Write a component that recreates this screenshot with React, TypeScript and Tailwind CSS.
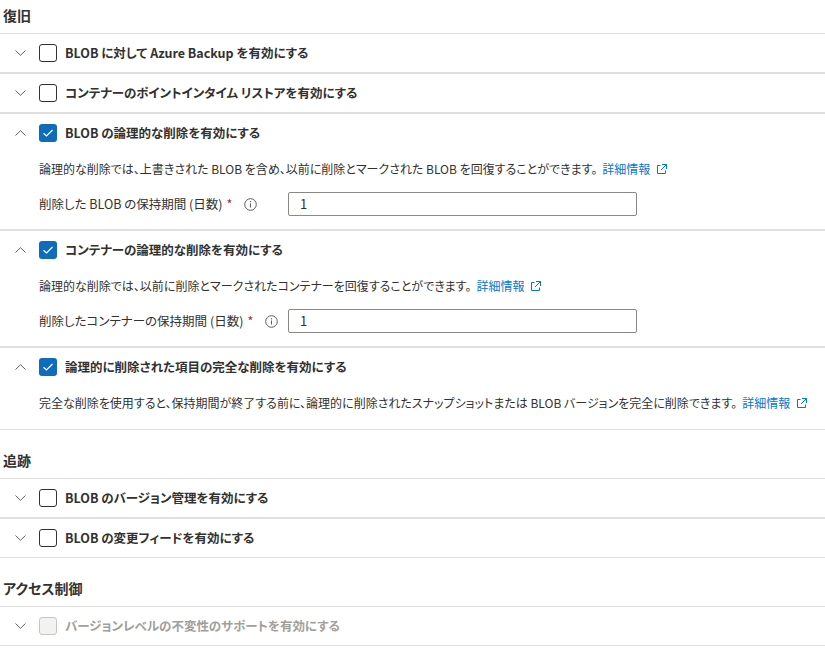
import React from "react";

const FONT = "[font-family:'Noto_Sans_CJK_JP','Noto_Sans',sans-serif] [font-feature-settings:'palt']";

function Chevron({ up }: { up?: boolean }) {
  return (
    <svg width="11" height="6" viewBox="0 0 11 6" className="shrink-0">
      {up ? (
        <path d="M0.5 5.5 L5.5 0.7 L10.5 5.5" fill="none" stroke="#605e5c" strokeWidth="1" />
      ) : (
        <path d="M0.5 0.5 L5.5 5.3 L10.5 0.5" fill="none" stroke="#605e5c" strokeWidth="1" />
      )}
    </svg>
  );
}

function Checkbox({ checked, disabled }: { checked?: boolean; disabled?: boolean }) {
  if (checked) {
    return (
      <div className="w-[18px] h-[18px] rounded-[3px] bg-[#0f6cbd] flex items-center justify-center shrink-0">
        <svg width="12" height="10" viewBox="0 0 12 10">
          <path d="M1.5 5.2 L4.5 8 L10.5 2" fill="none" stroke="white" strokeWidth="1.2" />
        </svg>
      </div>
    );
  }
  if (disabled) {
    return <div className="w-[18px] h-[18px] rounded-[3px] border border-[#c8c6c4] bg-[#f3f2f1] shrink-0" />;
  }
  return <div className="w-[18px] h-[18px] rounded-[3px] border border-[#323130] bg-white shrink-0" />;
}

function ExtIcon() {
  return (
    <svg width="11" height="11" viewBox="0 0 11 11" className="inline-block ml-[6px] align-[-1px]">
      <path d="M4.5 1.5 H1.5 V9.5 H9.5 V6.5" fill="none" stroke="#0078d4" strokeWidth="1" />
      <path d="M6 0.5 H10.5 V5 M10.5 0.5 L5 6" fill="none" stroke="#0078d4" strokeWidth="1" />
    </svg>
  );
}

function InfoIcon() {
  return (
    <svg width="13" height="13" viewBox="0 0 13 13" className="shrink-0">
      <circle cx="6.5" cy="6.5" r="5.8" fill="none" stroke="#605e5c" strokeWidth="1" />
      <path d="M6.5 5.5 V9.5" stroke="#605e5c" strokeWidth="1" />
      <circle cx="6.5" cy="3.8" r="0.7" fill="#605e5c" />
    </svg>
  );
}

function Heading({ title, top }: { title: string; top: string }) {
  return (
    <div className={`${top} pb-[8px] pl-[3px] text-[14px] leading-[20px] font-bold text-[#323130]`}>{title}</div>
  );
}

function Header({ label, open, checked, disabled }: { label: string; open?: boolean; checked?: boolean; disabled?: boolean }) {
  return (
    <div className="h-[38px] flex items-center pl-[15px]">
      <Chevron up={open} />
      <div className="w-[13px]" />
      <Checkbox checked={checked} disabled={disabled} />
      <span
        className={`ml-[8px] text-[12.5px] leading-[20px] font-semibold whitespace-nowrap ${disabled ? "text-[#a19f9d]" : "text-[#323130]"}`}
      >
        {label}
      </span>
    </div>
  );
}

function Item({ label, disabled }: { label: string; disabled?: boolean }) {
  return (
    <div className="border-y border-[#e1dfdd]">
      <Header label={label} disabled={disabled} />
    </div>
  );
}

function Desc({ text }: { text: string }) {
  return (
    <div className="mt-[7px] text-[12px] leading-[20px] text-[#323130] whitespace-nowrap">
      {text}
      <span className="text-[#0078d4] ml-[5px]">詳細情報</span>
      <ExtIcon />
    </div>
  );
}

function Field({ label }: { label: string }) {
  return (
    <div className="mt-[13px] flex items-center">
      <div className="w-[249px] flex items-center text-[12.5px] leading-[20px] text-[#323130] whitespace-nowrap">
        <span>{label}</span>
        <span className="text-[#a4262c] ml-[4px]">*</span>
        <span className="ml-[12px] flex items-center">
          <InfoIcon />
        </span>
      </div>
      <div className="w-[349px] h-[24px] border border-[#8a8886] rounded-[2px] flex items-center pl-[11px] text-[13px] text-[#323130]">
        1
      </div>
    </div>
  );
}

export default function App() {
  return (
    <div className={`w-[825px] h-[653px] bg-white overflow-hidden ${FONT}`}>
      <Heading title="復旧" top="pt-[5px]" />
      <Item label="BLOB に対して Azure Backup を有効にする" />
      <Item label="コンテナーのポイントインタイム リストアを有効にする" />
      <div className="border-y border-[#e1dfdd]">
        <Header label="BLOB の論理的な削除を有効にする" open checked />
        <div className="pl-[39px] pb-[13px]">
          <Desc text="論理的な削除では、上書きされた BLOB を含め、以前に削除とマークされた BLOB を回復することができます。" />
          <Field label="削除した BLOB の保持期間 (日数)" />
        </div>
      </div>
      <div className="border-y border-[#e1dfdd]">
        <Header label="コンテナーの論理的な削除を有効にする" open checked />
        <div className="pl-[39px] pb-[13px]">
          <Desc text="論理的な削除では、以前に削除とマークされたコンテナーを回復することができます。" />
          <Field label="削除したコンテナーの保持期間 (日数)" />
        </div>
      </div>
      <div className="border-y border-[#e1dfdd]">
        <Header label="論理的に削除された項目の完全な削除を有効にする" open checked />
        <div className="pl-[39px] pb-[16px]">
          <Desc text="完全な削除を使用すると、保持期間が終了する前に、論理的に削除されたスナップショットまたは BLOB バージョンを完全に削除できます。" />
        </div>
      </div>
      <Heading title="追跡" top="pt-[20px]" />
      <Item label="BLOB のバージョン管理を有効にする" />
      <Item label="BLOB の変更フィードを有効にする" />
      <Heading title="アクセス制御" top="pt-[20px]" />
      <Item label="バージョンレベルの不変性のサポートを有効にする" disabled />
    </div>
  );
}
